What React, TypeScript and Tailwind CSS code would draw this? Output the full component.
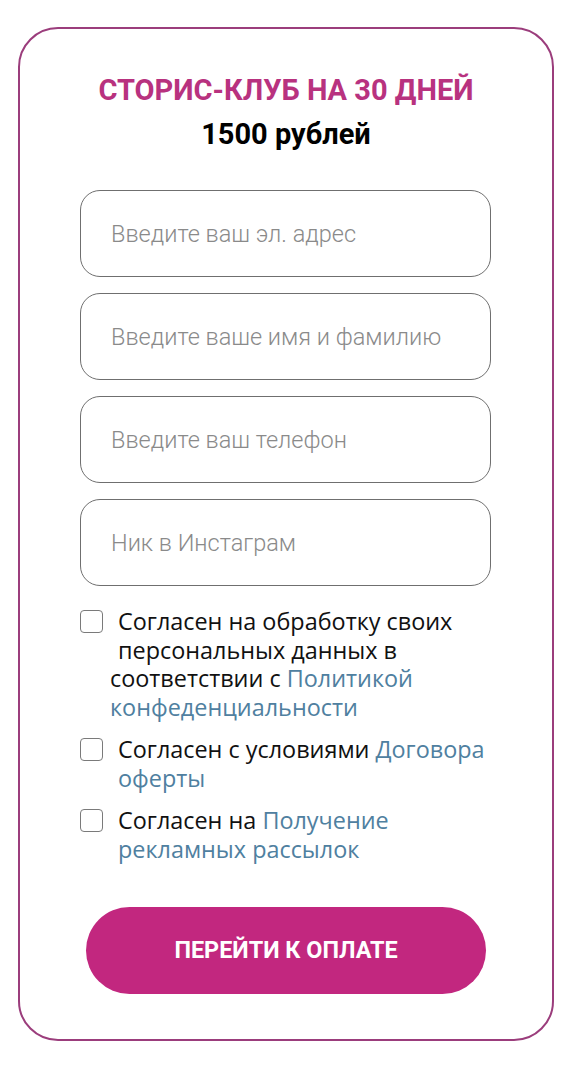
export default function App() {
  const fields = [
    "Введите ваш эл. адрес",
    "Введите ваше имя и фамилию",
    "Введите ваш телефон",
    "Ник в Инстаграм",
  ];

  const box = (
    <span className="mt-[3px] block h-[23px] w-[23px] shrink-0 rounded-[4px] border-[1.5px] border-[#7a7a7a] bg-white"></span>
  );

  return (
    <div className="min-h-[1079px] w-[573px] bg-white pt-[27px]">
      <div className="ml-[18px] w-[536px] rounded-[40px] border-2 border-[#9b3d7c] px-[60px] pt-[45px] pb-[45px]">
        <h1 className="text-center font-['Roboto',sans-serif] text-[29px] leading-[32px] font-bold text-[#b8327f]">
          СТОРИС-КЛУБ НА 30 ДНЕЙ
        </h1>
        <p className="mt-[12px] text-center font-['Roboto',sans-serif] text-[29px] leading-[32px] font-bold text-black">
          1500 рублей
        </p>

        <div className="mt-[40px] flex flex-col gap-[16px]">
          {fields.map((f) => (
            <input
              key={f}
              placeholder={f}
              className="h-[87px] w-[411px] rounded-[20px] border border-[#6f6f6f] bg-white pl-[30px] font-['Roboto',sans-serif] text-[23.5px] font-light text-[#333] outline-none placeholder:text-[#8a8a8a]"
            />
          ))}
        </div>

        <div className="mt-[21px] flex flex-col gap-[14px] font-['Open_Sans',sans-serif] text-[23.4px] leading-[28.5px] text-[#111]">
          <div className="relative pl-[30px]">
            <span className="absolute top-0 left-0">{box}</span>
            <span className="block pl-[8px]">Согласен на обработку своих</span>
            <span className="block pl-[8px]">персональных данных в</span>
            <span className="block">
              соответствии с <a className="text-[#4f80a0]">Политикой</a>
            </span>
            <span className="block text-[#4f80a0]">конфеденциальности</span>
          </div>

          <div className="flex gap-[15px]">
            {box}
            <p>
              Согласен с условиями <a className="text-[#4f80a0]">Договора</a>
              <br />
              <a className="text-[#4f80a0]">оферты</a>
            </p>
          </div>

          <div className="flex gap-[15px]">
            {box}
            <p>
              Согласен на <a className="text-[#4f80a0]">Получение</a>
              <br />
              <a className="text-[#4f80a0]">рекламных рассылок</a>
            </p>
          </div>
        </div>

        <button className="mx-auto mt-[44px] flex h-[87px] w-[400px] items-center justify-center rounded-full bg-[#c2277f] font-['Roboto',sans-serif] text-[23.4px] font-bold text-white">
          ПЕРЕЙТИ К ОПЛАТЕ
        </button>
      </div>
    </div>
  );
}
